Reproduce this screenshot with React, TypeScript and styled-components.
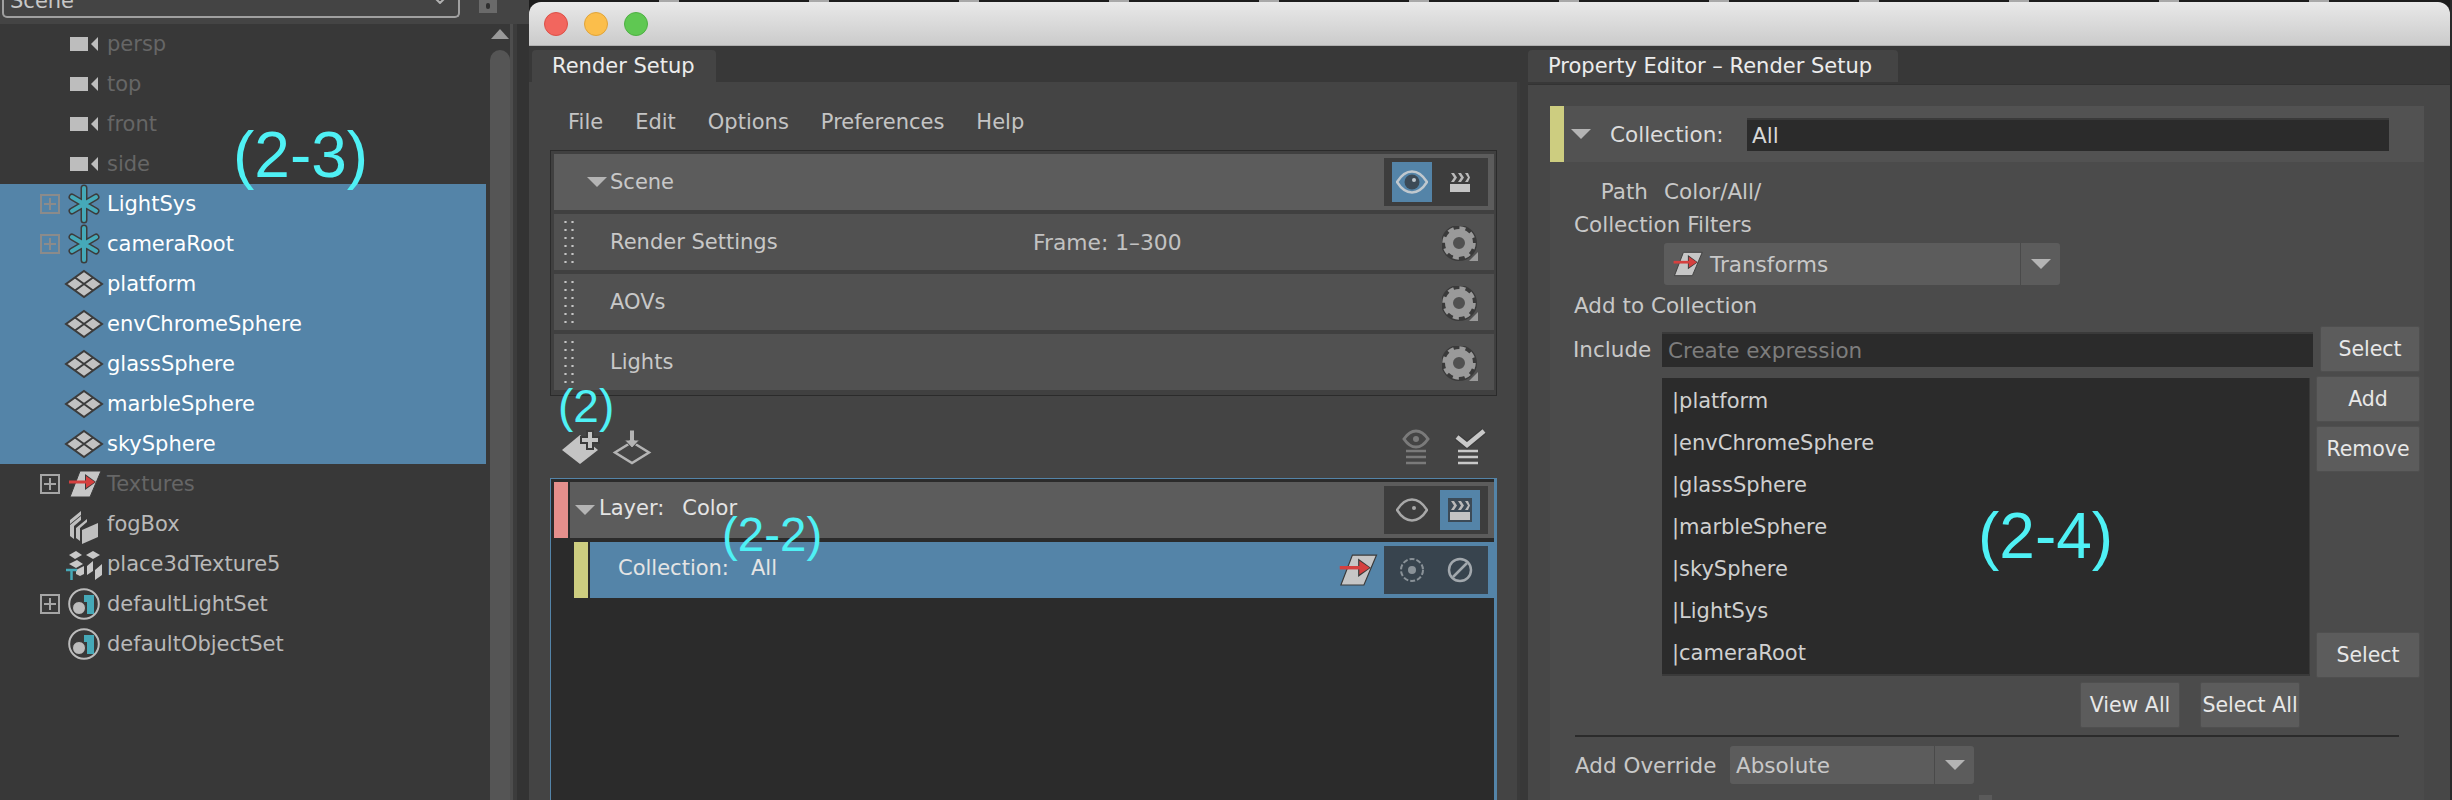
import React from 'react'
import styled, { createGlobalStyle } from 'styled-components'

const colors = {
  blue: '#5484a8',
  dark: '#2b2b2b',
  pane: '#444444',
  text: '#c8c8c8',
  yellow: '#cdcd80',
  pink: '#e58f8c',
  teal: '#45a9b8',
  cyan: '#4ff1f5',
}

const GlobalStyle = createGlobalStyle`
  html, body {
    margin: 0;
    padding: 0;
    background: #2a2a2a;
  }
  * {
    box-sizing: border-box;
  }
`

const Page = styled.div`
  position: relative;
  display: flex;
  width: 2452px;
  height: 800px;
  overflow: hidden;
  font-family: 'DejaVu Sans', sans-serif;
  font-size: 21px;
  color: ${colors.text};
`

/* ---------- outliner ---------- */

const Outliner = styled.aside`
  display: flex;
  flex-direction: column;
  flex: 0 0 529px;
  background: ${colors.pane};
`

const OutlinerTop = styled.div`
  display: flex;
  flex: 0 0 24px;
  overflow: hidden;
`

const SceneSelect = styled.div`
  display: flex;
  align-items: flex-start;
  justify-content: space-between;
  width: 458px;
  height: 18px;
  margin-left: 2px;
  padding: 0 12px 0 6px;
  border: 2px solid #a0a0a0;
  border-top: 0;
  border-radius: 0 0 5px 5px;

  span {
    margin-top: -11px;
    line-height: 24px;
  }
  svg {
    margin-top: -2px;
  }
`

const LockButton = styled.div`
  display: flex;
  justify-content: center;
  width: 18px;
  height: 13px;
  margin-left: 19px;
  background: #6a6a6a;

  &::after {
    content: '';
    width: 4px;
    height: 6px;
    margin-top: 3px;
    background: #2f2f2f;
    border-radius: 2px;
  }
`

const OutlinerBody = styled.div`
  display: flex;
  flex: 1;
`

const Tree = styled.div`
  flex: 0 0 486px;
  background: #383838;
`

const TreeRow = styled.div<{ $selected?: boolean }>`
  display: flex;
  align-items: center;
  height: 40px;
  padding-left: 40px;
  background: ${(p) => (p.$selected ? colors.blue : 'transparent')};
`

const ExpandSlot = styled.div`
  flex: 0 0 25px;
`

const Expander = styled.div<{ $dim?: boolean }>`
  position: relative;
  width: 20px;
  height: 20px;
  border: 2px solid ${(p) => (p.$dim ? '#8b8b8b' : '#a5a5a5')};

  &::before,
  &::after {
    content: '';
    position: absolute;
    background: ${(p) => (p.$dim ? '#8b8b8b' : '#a5a5a5')};
  }
  &::before {
    left: 2px;
    right: 2px;
    top: 7px;
    height: 2px;
  }
  &::after {
    top: 2px;
    bottom: 2px;
    left: 7px;
    width: 2px;
  }
`

const TreeIcon = styled.svg`
  flex: 0 0 38px;
  width: 38px;
  height: 40px;
  margin-right: 4px;
  overflow: visible;
`

const TreeLabel = styled.span<{ $tone: 'muted' | 'normal' | 'bright' }>`
  color: ${(p) => (p.$tone === 'muted' ? '#666666' : p.$tone === 'bright' ? '#ffffff' : '#b9b9b9')};
  white-space: nowrap;
`

const OutlinerScrollTrack = styled.div`
  flex: 0 0 24px;
  padding: 26px 0 0 4px;
  background: #383838;
`

const OutlinerScroll = styled.div`
  position: relative;
  height: 100%;
  background: #555555;
  border-radius: 10px 10px 0 0;

  &::before {
    content: '';
    position: absolute;
    left: 1px;
    top: -21px;
    border-left: 9px solid transparent;
    border-right: 9px solid transparent;
    border-bottom: 10px solid #9a9a9a;
  }
`

const OutlinerGutter = styled.div`
  flex: 1;
  background: linear-gradient(90deg, #4d4d4d 0 3px, #3c3c3c 3px 7px, #333333 7px 100%);
`

/* ---------- window ---------- */

const WindowShell = styled.div`
  display: flex;
  flex-direction: column;
  flex: 0 0 1921px;
  padding-top: 2px;
  background: repeating-linear-gradient(90deg, #1d1d1d 0 130px, #a8a8a8 130px 150px);
`

const TitleBar = styled.div`
  display: flex;
  align-items: center;
  gap: 16px;
  flex: 0 0 44px;
  padding-left: 15px;
  background: linear-gradient(#e9e9e9, #cbcbcb);
  border-radius: 12px 12px 0 0;
  border-bottom: 1px solid #b0b0b0;
`

const TrafficLight = styled.div<{ $fill: string; $edge: string }>`
  width: 24px;
  height: 24px;
  border-radius: 50%;
  background: ${(p) => p.$fill};
  border: 1px solid ${(p) => p.$edge};
`

const Panes = styled.div`
  display: flex;
  flex: 1;
  min-height: 0;
  background: #383838;
`

const Pane = styled.section<{ $width: number }>`
  display: flex;
  flex-direction: column;
  flex: 0 0 ${(p) => p.$width}px;
`

const TabBar = styled.div<{ $inset: number }>`
  display: flex;
  align-items: flex-end;
  flex: 0 0 36px;
  padding-left: ${(p) => p.$inset}px;
`

const Tab = styled.div<{ $width: number; $pad: number }>`
  display: flex;
  align-items: center;
  width: ${(p) => p.$width}px;
  height: 32px;
  padding-left: ${(p) => p.$pad}px;
  background: ${colors.pane};
  border-radius: 4px 4px 0 0;
  color: #ececec;
  white-space: nowrap;
`

/* ---------- render setup ---------- */

const RenderBody = styled.div`
  display: flex;
  flex-direction: column;
  flex: 1;
  min-height: 0;
  padding-left: 21px;
  background: ${colors.pane};
  border-right: 3px solid #3a3a3a;
`

const MenuBar = styled.nav`
  display: flex;
  align-items: center;
  gap: 32px;
  flex: 0 0 68px;
  padding: 12px 0 0 18px;
  color: #c4c4c4;
`

const SceneBox = styled.div`
  display: flex;
  flex-direction: column;
  gap: 4px;
  flex: 0 0 246px;
  width: 947px;
  padding: 3px 2px 0 3px;
  border: 1px solid ${colors.dark};
  background: #404040;
`

const ListRow = styled.div<{ $head?: boolean }>`
  position: relative;
  display: flex;
  align-items: center;
  flex: 0 0 56px;
  padding-left: ${(p) => (p.$head ? '33px' : '56px')};
  background: ${(p) => (p.$head ? '#5c5c5c' : '#515151')};
`

const Grip = styled.div`
  position: absolute;
  left: 8px;
  top: 4px;
  width: 14px;
  height: 48px;
  background-image: radial-gradient(circle, #c4c4c4 1px, transparent 1.3px);
  background-size: 7px 8px;
`

const Triangle = styled.div<{ $color?: string }>`
  flex: none;
  width: 0;
  height: 0;
  border-left: 10px solid transparent;
  border-right: 10px solid transparent;
  border-top: 10px solid ${(p) => p.$color ?? '#b4b4b4'};
`

const SceneName = styled.span`
  margin-left: 3px;
`

const FrameLabel = styled.span`
  position: absolute;
  left: 479px;
  font-size: 21.8px;
  color: #c2c2c2;
`

const GearSlot = styled.svg`
  position: absolute;
  right: 14px;
  top: 12px;
  width: 38px;
  height: 38px;
`

const RowTail = styled.div`
  display: flex;
  align-items: center;
  margin-left: auto;
  margin-right: 6px;
`

const ToggleGroup = styled.div<{ $tint?: boolean }>`
  display: flex;
  align-items: center;
  gap: 8px;
  width: 104px;
  height: 48px;
  padding: 0 8px;
  background: ${(p) => (p.$tint ? '#38444e' : '#3d3d3d')};
`

const ToggleCell = styled.div<{ $active?: boolean }>`
  display: flex;
  align-items: center;
  justify-content: center;
  width: 40px;
  height: 40px;
  background: ${(p) => (p.$active ? colors.blue : 'transparent')};
`

const LayerTools = styled.div`
  display: flex;
  align-items: center;
  flex: 0 0 82px;
  width: 948px;
  padding: 26px 0 0 10px;
`

const ToolIcon = styled.svg<{ $push?: boolean }>`
  width: 40px;
  height: 40px;
  margin-right: 11px;
  margin-left: ${(p) => (p.$push ? 'auto' : 0)};
  overflow: visible;
`

const LayerBox = styled.div`
  flex: 1;
  width: 947px;
  padding: 3px 0 0 3px;
  background: ${colors.dark};
  border: 1px solid ${colors.blue};
  border-width: 1px 3px 0 1px;
`

const LayerRow = styled.div<{ $indent: number; $accent: string; $fill: string }>`
  display: flex;
  align-items: center;
  height: 56px;
  margin-left: ${(p) => p.$indent}px;
  margin-bottom: 4px;
  padding-left: 7px;
  background: ${(p) => p.$fill};
  border-left: 14px solid ${(p) => p.$accent};
  box-shadow: inset 2px 0 0 ${colors.dark};
`

const LayerText = styled.span<{ $gap: number }>`
  margin-left: ${(p) => p.$gap}px;
  padding-bottom: 4px;
  color: #e4e4e4;
  white-space: nowrap;
`

const TextureSvg = styled.svg`
  margin-right: 5px;
  width: 44px;
  height: 46px;
`

/* ---------- property editor ---------- */

const PropertyBody = styled.div`
  flex: 1;
  min-height: 0;
  margin: 2px 0 0 8px;
  padding: 21px 26px 0 22px;
  background: #474747;
  border-top: 1px solid #333333;
  font-size: 21.5px;
`

const Section = styled.div`
  height: 100%;
  background: #4b4b4b;
`

const SectionHead = styled.div`
  display: flex;
  align-items: center;
  height: 56px;
  background: #525252;
  border-left: 14px solid ${colors.yellow};
  padding-left: 7px;
`

const HeadLabel = styled.span`
  flex: 0 0 137px;
  margin-left: 19px;
  color: #dcdcdc;
  white-space: nowrap;
`

const NameField = styled.div`
  display: flex;
  align-items: center;
  width: 642px;
  height: 33px;
  padding-left: 5px;
  background: ${colors.dark};
  border-top: 2px solid #3a3a3a;
  color: #d8d8d8;
`

const PathRow = styled.div`
  display: flex;
  align-items: center;
  height: 36px;
  margin-top: 11px;
  white-space: nowrap;
`

const PathLabel = styled.span`
  width: 98px;
  text-align: right;
  margin-right: 16px;
`

const BlockLabel = styled.div<{ $height: number }>`
  display: flex;
  align-items: center;
  height: ${(p) => p.$height}px;
  padding-left: 24px;
`

const Select = styled.div<{ $indent: number; $width: number; $height: number; $top?: number }>`
  display: flex;
  align-items: center;
  width: ${(p) => p.$width}px;
  height: ${(p) => p.$height}px;
  margin-top: ${(p) => p.$top ?? 0}px;
  margin-left: ${(p) => p.$indent}px;
  padding-left: 6px;
  background: #5c5c5c;
  border-radius: 3px;
  white-space: nowrap;
`

const SelectCaret = styled.div`
  display: flex;
  align-items: center;
  justify-content: center;
  align-self: stretch;
  flex: 0 0 40px;
  margin-left: auto;
  border-left: 1px solid #4a4a4a;
`

const FilterIcon = styled.svg`
  flex: none;
  width: 34px;
  height: 36px;
  margin-right: 6px;
`

const IncludeRow = styled.div`
  display: flex;
  align-items: center;
  height: 46px;
`

const IncludeLabel = styled.span`
  flex: 0 0 112px;
  padding-left: 23px;
`

const ExpressionField = styled.div`
  display: flex;
  align-items: center;
  width: 651px;
  height: 35px;
  padding-left: 6px;
  margin-right: 7px;
  background: ${colors.dark};
  border-top: 2px solid #3a3a3a;
  color: #7d7d7d;
`

const Button = styled.div<{ $width?: number }>`
  display: flex;
  align-items: center;
  justify-content: center;
  flex: none;
  width: ${(p) => p.$width ?? 100}px;
  height: 46px;
  background: #5c5c5c;
  border: 1px solid #4f4f4f;
  border-radius: 2px;
  font-size: 20.5px;
  color: #e8e8e8;
  white-space: nowrap;
`

const MemberRow = styled.div`
  display: flex;
  height: 302px;
  margin-top: 4px;
  padding-left: 112px;
`

const MemberList = styled.div`
  flex: 0 0 648px;
  height: 298px;
  margin-top: 2px;
  padding: 2px 0 0 10px;
  background: ${colors.dark};
  border-bottom: 2px solid #3a3a3a;
  border-right: 1px solid #3a3a3a;
  font-size: 21px;
`

const Member = styled.div`
  display: flex;
  align-items: center;
  height: 42px;
  color: #d0d0d0;
`

const SideButtons = styled.div`
  display: flex;
  flex-direction: column;
  gap: 4px;
  margin-left: 6px;

  > :last-child {
    margin-top: auto;
  }
`

const FooterButtons = styled.div`
  display: flex;
  justify-content: flex-end;
  gap: 20px;
  margin-top: 4px;
  padding-right: 124px;
`

const Rule = styled.div`
  height: 2px;
  margin: 7px 25px 9px;
  background: ${colors.dark};
`

const OverrideRow = styled.div`
  display: flex;
  align-items: center;
  padding-left: 25px;
`

const OverrideLabel = styled.span`
  flex: 0 0 155px;
`

const NextRowHandle = styled.div`
  width: 13px;
  height: 5px;
  margin: 11px 0 0 429px;
  background: #5a5a5a;
`

const Annotation = styled.div<{ $x: number; $y: number; $size: number }>`
  position: absolute;
  left: ${(p) => p.$x}px;
  top: ${(p) => p.$y}px;
  font-family: 'Liberation Sans', sans-serif;
  font-size: ${(p) => p.$size}px;
  line-height: 1;
  color: ${colors.cyan};
  white-space: nowrap;
`

/* ---------- icons ---------- */

const CameraIcon = () => (
  <TreeIcon viewBox="0 0 38 40">
    <rect x="5" y="13" width="18" height="14" fill="#bdbdbd" />
    <path d="M33 13v14l-7-7z" fill="#bdbdbd" />
  </TreeIcon>
)

const GroupIcon = () => (
  <TreeIcon viewBox="0 0 38 40">
    <g strokeLinecap="round" stroke="#3c3c3c" strokeWidth="7">
      <path d="M19 4v32M7 13l24 14M31 13L7 27" />
    </g>
    <g strokeLinecap="round" stroke={colors.teal} strokeWidth="4">
      <path d="M19 4v32M7 13l24 14M31 13L7 27" />
    </g>
  </TreeIcon>
)

const MeshIcon = () => (
  <TreeIcon viewBox="0 0 38 40">
    <path d="M19 7l18 13-18 13L1 20z" fill="#c2c2c2" stroke="#3c3c3c" strokeWidth="2" />
    <path d="M10 13.5l18 13M28 13.5l-18 13" stroke="#3c3c3c" strokeWidth="2" />
  </TreeIcon>
)

const TextureGlyph = () => (
  <>
    <path d="M15 7h21L25 33H5z" fill="#c6c6c6" stroke="#3a3a3a" strokeWidth="1" />
    <path d="M20 10l11 8-11 8z" fill="#3a3a3a" />
    <path d="M4 18h20" stroke="#d5403f" strokeWidth="3" />
    <path d="M21 12l9 6-9 6z" fill="#d5403f" />
  </>
)

const TextureIcon = () => (
  <TreeIcon viewBox="0 0 38 40">
    <TextureGlyph />
  </TreeIcon>
)

const FogIcon = () => (
  <TreeIcon viewBox="0 0 38 40">
    <path d="M5 16l11-9v4L5 20zM5 21l11-9v4L9 22v13l-4-3zM11 24l11-9v3l-7 6v13l-4-3z" fill="#c0c0c0" />
    <path d="M17 26l16-7v14l-16 7z" fill="#c0c0c0" />
  </TreeIcon>
)

const PlaceIcon = () => (
  <TreeIcon viewBox="0 0 38 40">
    <path d="M4 11l7-4 6 4-7 4zM21 11l7-4 7 4-7 4z" fill="#c8c8c8" />
    <path d="M4 20l8-4 6 4-7 4zM19 30v-8l-8 4v4l4 2zM22 22l6-5v10l-6 4zM30 26l7-6v11l-7 5z" fill="#c8c8c8" />
    <path d="M1 26h11M6.500 26v10" stroke={colors.teal} strokeWidth="2.500" />
  </TreeIcon>
)

const SetIcon = () => (
  <TreeIcon viewBox="0 0 38 40">
    <circle cx="19" cy="20" r="14.800" fill="none" stroke="#bcbcbc" strokeWidth="2" />
    <path d="M19 11h10v19h-7V18h-3z" fill={colors.teal} />
    <circle cx="14" cy="24" r="6.500" fill="#bcbcbc" stroke="#383838" />
  </TreeIcon>
)

const EyeGlyph = ({ stroke, pupil }: { stroke: string; pupil: string }) => (
  <svg width="32" height="24" viewBox="0 0 32 24">
    <path d="M1 12C6 4 11 1.500 16 1.500S26 4 31 12c-5 8-10 10.500-15 10.500S6 20 1 12z" fill="none" stroke={stroke} strokeWidth="2.500" />
    <circle cx="16" cy="12" r="7.500" fill={pupil} />
    <circle cx="18" cy="10" r="2" fill={stroke} />
  </svg>
)

const ClapperGlyph = ({ frame }: { frame?: boolean }) => (
  <svg width="24" height="24" viewBox="0 0 24 24">
    {frame && <rect x="0" y="0" width="24" height="24" fill="#3c4a56" />}
    <path d="M3 3h3l3 4.500L6 12H3l3-4.500zM10 3h3l3 4.500-3 4.500h-3l3-4.500zM17 3h3l2 4.500-2 4.500h-3l3-4.500z" fill="#b9b9b9" />
    <rect x="2" y="14" width="20" height="8" fill="#c4c4c4" />
  </svg>
)

const GearIcon = () => (
  <GearSlot viewBox="0 0 38 38">
    <circle cx="17" cy="17" r="12.500" fill="none" stroke="#3a3a3a" strokeWidth="11" />
    <circle cx="17" cy="17" r="10" fill="none" stroke="#9a9a9a" strokeWidth="8" />
    <circle cx="17" cy="17" r="14.500" fill="none" stroke="#9a9a9a" strokeWidth="4.500" strokeDasharray="5.800 5.590" />
    <path d="M36 26v9h-9z" fill="#9a9a9a" />
  </GearSlot>
)

const AddLayerIcon = () => (
  <ToolIcon viewBox="0 0 40 40">
    <path d="M20 5L38 20 20 34 2 20z" fill="#c4c4c4" />
    <path d="M26 0h8v6h6v8h-6v6h-8v-6h-6V6h6z" fill="#3c3c3c" />
    <path d="M28 2h4v6h6v4h-6v6h-4v-6h-6V8h6z" fill="#c4c4c4" />
  </ToolIcon>
)

const ImportIcon = () => (
  <ToolIcon viewBox="0 0 40 40">
    <path d="M21 12L38 22.500 21 33 4 22.500z" fill="none" stroke="#b4b4b4" strokeWidth="2.500" />
    <path d="M18.500 0h5v10h5L21 18l-7.500-8h5z" fill="#b4b4b4" stroke="#444444" />
  </ToolIcon>
)

const EyeListIcon = () => (
  <ToolIcon viewBox="0 0 40 40" $push>
    <path d="M8 9c4-6 8-8 12-8s8 2 12 8c-4 6-8 8-12 8s-8-2-12-8z" fill="none" stroke="#7a7a7a" strokeWidth="3" />
    <circle cx="20" cy="9" r="3" fill="#7a7a7a" />
    <path d="M10 21h20M10 27h20M10 33h20" stroke="#7a7a7a" strokeWidth="2.500" />
  </ToolIcon>
)

const CheckListIcon = () => (
  <ToolIcon viewBox="0 0 40 40">
    <path d="M11 21h20M11 27h20M11 33h20" stroke="#c8c8c8" strokeWidth="2.500" />
    <path d="M10 7l10 8L37 1" fill="none" stroke="#3c3c3c" strokeWidth="7" />
    <path d="M10 7l10 8L37 1" fill="none" stroke="#c8c8c8" strokeWidth="4.500" />
  </ToolIcon>
)

const TargetGlyph = () => (
  <svg width="26" height="26" viewBox="0 0 26 26">
    <circle cx="13" cy="13" r="11" fill="none" stroke="#8a9298" strokeWidth="2" strokeDasharray="5 2" />
    <circle cx="13" cy="13" r="4" fill="#8a9298" />
  </svg>
)

const BlockedGlyph = () => (
  <svg width="26" height="26" viewBox="0 0 26 26">
    <circle cx="13" cy="13" r="11" fill="none" stroke="#a2a8ad" strokeWidth="2.500" />
    <path d="M6 20L20 6" stroke="#a2a8ad" strokeWidth="2.500" />
  </svg>
)

/* ---------- data ---------- */

type TreeItem = {
  name: string
  icon: React.FC
  tone: 'muted' | 'normal' | 'bright'
  expand?: boolean
  selected?: boolean
}

const treeItems: TreeItem[] = [
  { name: 'persp', icon: CameraIcon, tone: 'muted' },
  { name: 'top', icon: CameraIcon, tone: 'muted' },
  { name: 'front', icon: CameraIcon, tone: 'muted' },
  { name: 'side', icon: CameraIcon, tone: 'muted' },
  { name: 'LightSys', icon: GroupIcon, tone: 'bright', expand: true, selected: true },
  { name: 'cameraRoot', icon: GroupIcon, tone: 'bright', expand: true, selected: true },
  { name: 'platform', icon: MeshIcon, tone: 'bright', selected: true },
  { name: 'envChromeSphere', icon: MeshIcon, tone: 'bright', selected: true },
  { name: 'glassSphere', icon: MeshIcon, tone: 'bright', selected: true },
  { name: 'marbleSphere', icon: MeshIcon, tone: 'bright', selected: true },
  { name: 'skySphere', icon: MeshIcon, tone: 'bright', selected: true },
  { name: 'Textures', icon: TextureIcon, tone: 'muted', expand: true },
  { name: 'fogBox', icon: FogIcon, tone: 'normal' },
  { name: 'place3dTexture5', icon: PlaceIcon, tone: 'normal' },
  { name: 'defaultLightSet', icon: SetIcon, tone: 'normal', expand: true },
  { name: 'defaultObjectSet', icon: SetIcon, tone: 'normal' },
]

const menuItems = ['File', 'Edit', 'Options', 'Preferences', 'Help']
const sceneItems = ['Render Settings', 'AOVs', 'Lights']
const members = ['platform', 'envChromeSphere', 'glassSphere', 'marbleSphere', 'skySphere', 'LightSys', 'cameraRoot']

export default function App() {
  return (
    <Page>
      <GlobalStyle />

      <Outliner>
        <OutlinerTop>
          <SceneSelect>
            <span>Scene</span>
            <svg width="12" height="6" viewBox="0 0 12 6">
              <path d="M1 0l5 5 5-5" fill="none" stroke="#b0b0b0" strokeWidth="2" />
            </svg>
          </SceneSelect>
          <LockButton />
        </OutlinerTop>
        <OutlinerBody>
          <Tree>
            {treeItems.map((item) => (
              <TreeRow key={item.name} $selected={item.selected}>
                <ExpandSlot>{item.expand && <Expander $dim={item.selected} />}</ExpandSlot>
                <item.icon />
                <TreeLabel $tone={item.tone}>{item.name}</TreeLabel>
              </TreeRow>
            ))}
          </Tree>
          <OutlinerScrollTrack>
            <OutlinerScroll />
          </OutlinerScrollTrack>
          <OutlinerGutter />
        </OutlinerBody>
      </Outliner>

      <WindowShell>
        <TitleBar>
          <TrafficLight $fill="#f2665e" $edge="#dc5047" />
          <TrafficLight $fill="#fbbe4b" $edge="#e0a43a" />
          <TrafficLight $fill="#5fc852" $edge="#4eb043" />
        </TitleBar>
        <Panes>
          <Pane $width={991}>
            <TabBar $inset={3}>
              <Tab $width={184} $pad={20}>Render Setup</Tab>
            </TabBar>
            <RenderBody>
              <MenuBar>
                {menuItems.map((item) => (
                  <span key={item}>{item}</span>
                ))}
              </MenuBar>
              <SceneBox>
                <ListRow $head>
                  <Triangle />
                  <SceneName>Scene</SceneName>
                  <RowTail>
                    <ToggleGroup>
                      <ToggleCell $active>
                        <EyeGlyph stroke="#c0c8ce" pupil="#3c4a56" />
                      </ToggleCell>
                      <ToggleCell>
                        <ClapperGlyph />
                      </ToggleCell>
                    </ToggleGroup>
                  </RowTail>
                </ListRow>
                {sceneItems.map((item) => (
                  <ListRow key={item}>
                    <Grip />
                    {item}
                    {item === 'Render Settings' && <FrameLabel>Frame: 1–300</FrameLabel>}
                    <GearIcon />
                  </ListRow>
                ))}
              </SceneBox>
              <LayerTools>
                <AddLayerIcon />
                <ImportIcon />
                <EyeListIcon />
                <CheckListIcon />
              </LayerTools>
              <LayerBox>
                <LayerRow $indent={0} $accent={colors.pink} $fill="#5c5c5c">
                  <Triangle />
                  <LayerText $gap={4}>Layer:</LayerText>
                  <LayerText $gap={18}>Color</LayerText>
                  <RowTail>
                    <ToggleGroup>
                      <ToggleCell>
                        <EyeGlyph stroke="#a8a8a8" pupil="#3d3d3d" />
                      </ToggleCell>
                      <ToggleCell $active>
                        <ClapperGlyph frame />
                      </ToggleCell>
                    </ToggleGroup>
                  </RowTail>
                </LayerRow>
                <LayerRow $indent={20} $accent={colors.yellow} $fill={colors.blue}>
                  <LayerText $gap={23}>Collection:</LayerText>
                  <LayerText $gap={22}>All</LayerText>
                  <RowTail>
                    <TextureSvg viewBox="0 0 38 40">
                      <TextureGlyph />
                    </TextureSvg>
                    <ToggleGroup $tint>
                      <ToggleCell>
                        <TargetGlyph />
                      </ToggleCell>
                      <ToggleCell>
                        <BlockedGlyph />
                      </ToggleCell>
                    </ToggleGroup>
                  </RowTail>
                </LayerRow>
              </LayerBox>
            </RenderBody>
          </Pane>

          <Pane $width={930}>
            <TabBar $inset={8}>
              <Tab $width={370} $pad={20}>Property Editor – Render Setup</Tab>
            </TabBar>
            <PropertyBody>
              <Section>
                <SectionHead>
                  <Triangle />
                  <HeadLabel>Collection:</HeadLabel>
                  <NameField>All</NameField>
                </SectionHead>
                <PathRow>
                  <PathLabel>Path</PathLabel>
                  Color/All/
                </PathRow>
                <BlockLabel $height={30}>Collection Filters</BlockLabel>
                <Select $indent={114} $width={396} $height={42} $top={4}>
                  <FilterIcon viewBox="0 0 38 40">
                    <TextureGlyph />
                  </FilterIcon>
                  Transforms
                  <SelectCaret>
                    <Triangle />
                  </SelectCaret>
                </Select>
                <BlockLabel $height={41}>Add to Collection</BlockLabel>
                <IncludeRow>
                  <IncludeLabel>Include</IncludeLabel>
                  <ExpressionField>Create expression</ExpressionField>
                  <Button>Select</Button>
                </IncludeRow>
                <MemberRow>
                  <MemberList>
                    {members.map((member) => (
                      <Member key={member}>|{member}</Member>
                    ))}
                  </MemberList>
                  <SideButtons>
                    <Button $width={104}>Add</Button>
                    <Button $width={104}>Remove</Button>
                    <Button $width={104}>Select</Button>
                  </SideButtons>
                </MemberRow>
                <FooterButtons>
                  <Button>View All</Button>
                  <Button>Select All</Button>
                </FooterButtons>
                <Rule />
                <OverrideRow>
                  <OverrideLabel>Add Override</OverrideLabel>
                  <Select $indent={0} $width={244} $height={38}>
                    Absolute
                    <SelectCaret>
                      <Triangle />
                    </SelectCaret>
                  </Select>
                </OverrideRow>
                <NextRowHandle />
              </Section>
            </PropertyBody>
          </Pane>
        </Panes>
      </WindowShell>

      <Annotation $x={233} $y={123} $size={64}>(2-3)</Annotation>
      <Annotation $x={558} $y={383} $size={46}>(2)</Annotation>
      <Annotation $x={722} $y={511} $size={47.5}>(2-2)</Annotation>
      <Annotation $x={1978} $y={504} $size={64}>(2-4)</Annotation>
    </Page>
  )
}
